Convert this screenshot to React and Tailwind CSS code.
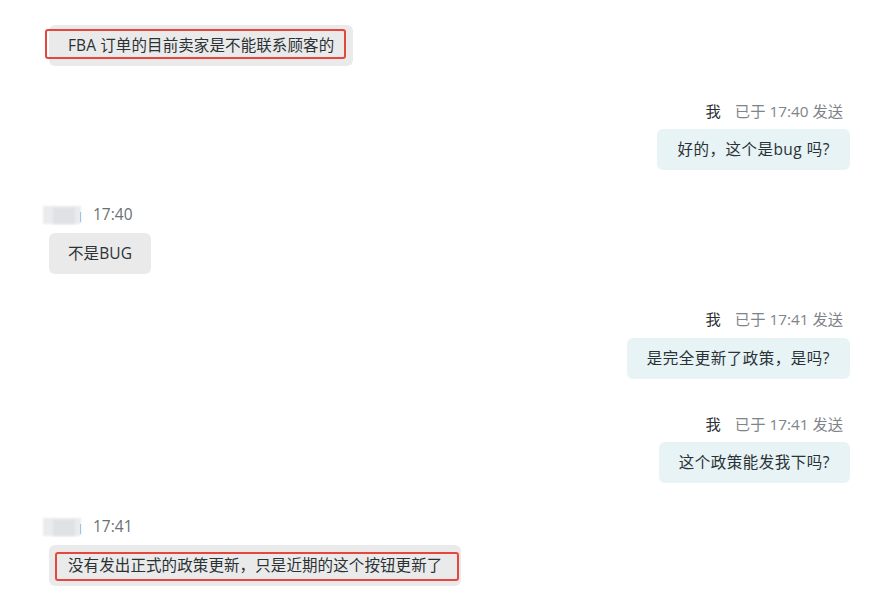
import React from 'react';

const font = { fontFamily: '"Open Sans", "Noto Sans CJK SC", sans-serif' };

const Avatar = () => (
    <div className="relative w-[38px] h-[18px] mr-[12px]">
        <div className="absolute inset-0 bg-[#e9ebed] blur-[1px]" />
        <div className="absolute left-[10px] top-[2px] w-[22px] h-[16px] bg-[#dfe2e5] blur-[1px]" />
        <div className="absolute right-0 top-[6px] w-[1px] h-[10px] bg-[#9cc3e6]" />
    </div>
);

const LeftMeta = ({ time }) => (
    <div className="flex items-center h-[20px] ml-[43px]">
        <Avatar />
        <span className="text-[15.5px] text-[#6b6f72]">{time}</span>
    </div>
);

const RightMeta = ({ time }) => (
    <div className="flex items-center justify-end h-[20px] mr-[42px] text-[15.3px]">
        <span className="text-[#2b2f33] mr-[14px]">我</span>
        <span className="text-[#808488]">已于 {time} 发送</span>
    </div>
);

const LeftBubble = ({ children, mark }) => (
    <div className="flex ml-[49px]">
        <div className="relative bg-[#eaeaea] rounded-[6px] px-[19px] h-[41px] flex items-center text-[15.5px] tracking-[0.1px] text-[#2a3236]">
            {mark && (
                <div className={`absolute border-2 border-[#e5463e] rounded-[3px] ${mark}`} />
            )}
            <span className="relative">{children}</span>
        </div>
    </div>
);

const RightBubble = ({ children }) => (
    <div className="flex justify-end mr-[35px]">
        <div className="bg-[#e7f3f4] rounded-[6px] px-[20px] h-[41px] flex items-center text-[15.5px] tracking-[0.5px] text-[#2a3236]">
            {children}
        </div>
    </div>
);

const App = () => {
    return (
        <div className="w-[885px] h-[609px] bg-white overflow-hidden flex flex-col pt-[25px]" style={font}>
            <LeftBubble mark="left-[-4px] top-[4px] right-[7px] h-[30px]">FBA 订单的目前卖家是不能联系顾客的</LeftBubble>

            <div className="mt-[35px] flex flex-col gap-[8px]">
                <RightMeta time="17:40" />
                <RightBubble>好的，这个是bug 吗?</RightBubble>
            </div>

            <div className="mt-[35px] flex flex-col gap-[8px]">
                <LeftMeta time="17:40" />
                <LeftBubble>不是BUG</LeftBubble>
            </div>

            <div className="mt-[35px] flex flex-col gap-[9px]">
                <RightMeta time="17:41" />
                <RightBubble>是完全更新了政策，是吗?</RightBubble>
            </div>

            <div className="mt-[35px] flex flex-col gap-[8px]">
                <RightMeta time="17:41" />
                <RightBubble>这个政策能发我下吗?</RightBubble>
            </div>

            <div className="mt-[34px] flex flex-col gap-[8px]">
                <LeftMeta time="17:41" />
                <LeftBubble mark="left-[6px] top-[7px] right-[2px] h-[29px]">没有发出正式的政策更新，只是近期的这个按钮更新了</LeftBubble>
            </div>
        </div>
    );
};

export default App;
